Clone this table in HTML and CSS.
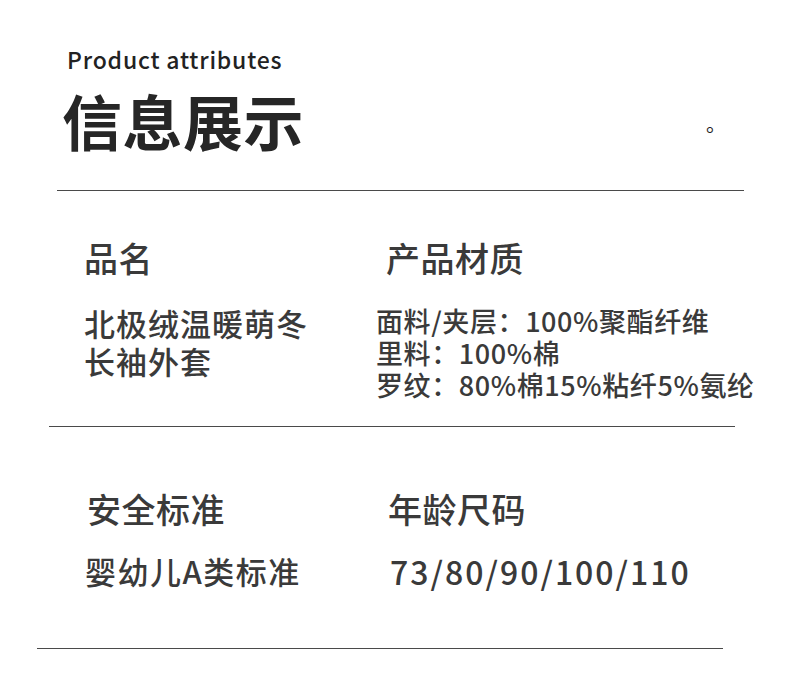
FILE: index.html
```html
<!DOCTYPE html>
<html lang="zh">
<head>
<meta charset="utf-8">
<link rel="stylesheet" href="styles.css">
</head>
<body>
<div class="page">
  <header class="head">
    <div class="en">Product attributes</div>
    <div class="title-row">
      <h1 class="title">信息展示</h1>
      <span class="dot">。</span>
    </div>
  </header>
  <hr class="rule rule1">
  <section class="sec sec1">
    <div class="col left">
      <h2 class="label">品名</h2>
      <div class="val name">北极绒温暖萌冬<br>长袖外套</div>
    </div>
    <div class="col right">
      <h2 class="label lab-r">产品材质</h2>
      <div class="val mat">
        <div>面料/夹层：100%聚酯纤维</div>
        <div>里料：100%棉</div>
        <div>罗纹：80%棉15%粘纤5%氨纶</div>
      </div>
    </div>
  </section>
  <hr class="rule rule2">
  <section class="sec sec2">
    <div class="col left">
      <h2 class="label">安全标准</h2>
      <div class="val">婴幼儿A类标准</div>
    </div>
    <div class="col right">
      <h2 class="label">年龄尺码</h2>
      <div class="val sizes">73/80/90/100/110</div>
    </div>
  </section>
  <hr class="rule rule3">
</div>
</body>
</html>
```
FILE: styles.css
```css
html, body {
  margin: 0;
  padding: 0;
  background: #fff;
}
body {
  font-family: "Noto Sans CJK SC", "Noto Sans", sans-serif;
  color: #333;
  width: 790px;
  height: 693px;
  overflow: hidden;
}
.page {
  display: flex;
  flex-direction: column;
}
.head {
  padding: 42px 0 0 67px;
}
.en {
  font-size: 23px;
  font-weight: 500;
  color: #222;
  line-height: 34px;
  letter-spacing: 0.8px;
}
.title-row {
  display: flex;
  align-items: center;
  margin-top: 8px;
}
.title {
  margin: 0 0 0 -5px;
  font-size: 60px;
  font-weight: 700;
  color: #262626;
  line-height: 72px;
  letter-spacing: 0.5px;
}
.dot {
  margin-left: auto;
  margin-right: 64px;
  font-size: 20px;
  color: #222;
  line-height: 20px;
  transform: translateY(4px);
}
.rule {
  border: 0;
  height: 1px;
  background: #4a4a4a;
  margin: 0;
}
.rule1 { margin: 34px 46px 0 57px; }
.rule2 { margin: 25px 55px 0 49px; }
.rule3 { margin: 55px 67px 0 37px; }
.sec {
  display: grid;
  grid-template-columns: 292px 1fr;
}
.label {
  margin: 0;
  font-size: 34px;
  font-weight: 500;
  color: #3a3a3a;
  line-height: 44px;
  letter-spacing: 0.5px;
}
.val {
  font-size: 32px;
  font-weight: 500;
  color: #3a3a3a;
}
.sec1 {
  padding: 45px 0 0 84px;
}
.sec1 .name {
  margin-top: 24px;
  line-height: 38px;
  font-size: 31px;
  letter-spacing: 1px;
}
.sec1 .lab-r { margin-left: 10px; }
.sec1 .mat {
  margin-top: 25px;
  font-size: 27px;
  line-height: 32px;
  letter-spacing: 0.6px;
}
.sec2 {
  padding: 60px 0 0 87px;
  grid-template-columns: 301px 1fr;
}
.sec2 .val {
  margin-top: 18px;
  margin-left: -2px;
  line-height: 44px;
  font-size: 31px;
  letter-spacing: 1.5px;
}
.sec2 .sizes {
  margin-left: 2px;
  font-size: 32px;
  letter-spacing: 2px;
}
```
